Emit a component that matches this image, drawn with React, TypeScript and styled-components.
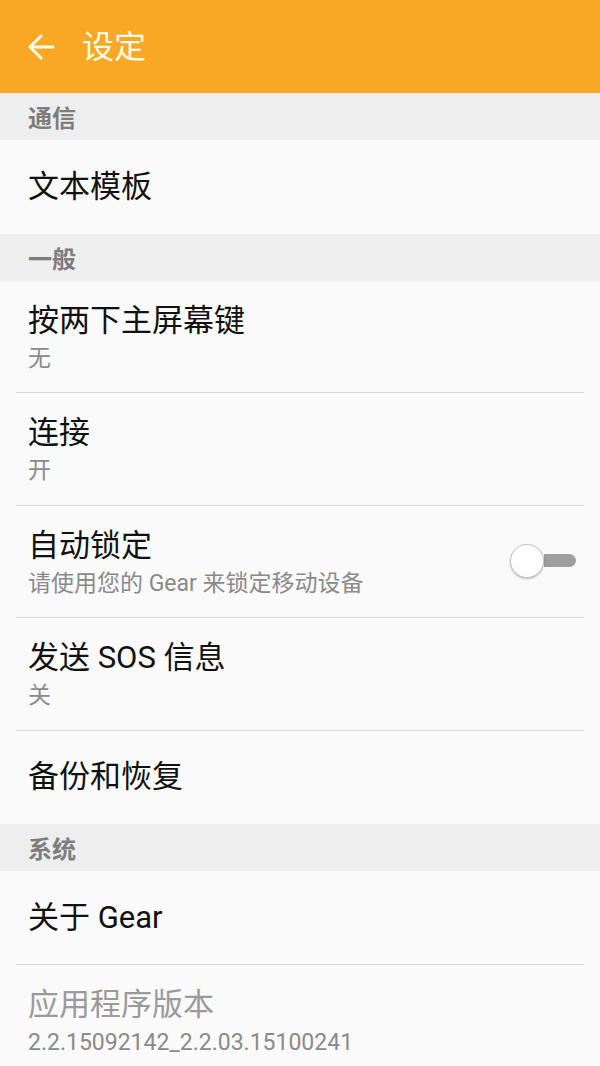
import React from "react";
import styled, { createGlobalStyle } from "styled-components";

const GlobalStyle = createGlobalStyle`
  html, body {
    margin: 0;
    padding: 0;
    background: #fafafa;
  }
  body {
    font-family: Roboto, "Noto Sans CJK SC", sans-serif;
  }
`;

const Screen = styled.div`
  width: 600px;
  min-height: 1066px;
  background: #fafafa;
  overflow: hidden;
`;

const AppBar = styled.header`
  height: 93px;
  background: #f9a825;
  display: flex;
  align-items: center;
  padding-left: 26px;
  gap: 26px;
  box-sizing: border-box;
`;

const BackButton = styled.button`
  border: none;
  background: none;
  padding: 0;
  display: flex;
  align-items: center;
  cursor: pointer;
`;

const AppTitle = styled.h1`
  margin: 0;
  color: #fffde7;
  font-size: 32px;
  font-weight: 400;
  line-height: 1;
`;

const SectionHeader = styled.div`
  height: 47px;
  background: #eeeeee;
  display: flex;
  align-items: center;
  padding-left: 28px;
  color: #7d7d7d;
  font-size: 24px;
  font-weight: 700;
`;

const Row = styled.div<{ $tall?: boolean; $divider?: boolean }>`
  min-height: ${(p) => (p.$tall ? "112.5px" : "93.5px")};
  display: flex;
  align-items: ${(p) => (p.$tall ? "flex-start" : "center")};
  padding: ${(p) => (p.$tall ? "20px 22px 0 28px" : "0 22px 0 28px")};
  box-sizing: border-box;
  position: relative;
  ${(p) =>
    p.$divider &&
    `
    &::after {
      content: "";
      position: absolute;
      left: 16px;
      right: 16px;
      bottom: 0;
      height: 1px;
      background: #d6d6d6;
    }
  `}
`;

const RowText = styled.div`
  flex: 1;
  display: flex;
  flex-direction: column;
`;

const Title = styled.div<{ $muted?: boolean }>`
  font-size: 31px;
  line-height: 40px;
  color: ${(p) => (p.$muted ? "#9a9a9a" : "#111111")};
`;

const Sub = styled.div`
  font-size: 23px;
  line-height: 32px;
  margin-top: 2px;
  color: #8a8a8a;
`;

const Switch = styled.div`
  position: relative;
  width: 68px;
  height: 34px;
  margin-top: 18px;
  display: flex;
  align-items: center;
`;

const Track = styled.div`
  margin-left: 34px;
  width: 32px;
  height: 13px;
  border-radius: 0 7px 7px 0;
  background: #9e9e9e;
`;

const Knob = styled.div`
  position: absolute;
  left: 0;
  top: 0;
  width: 34px;
  height: 34px;
  border-radius: 50%;
  background: #ffffff;
  border: 1px solid #c4c4c4;
  box-sizing: border-box;
  box-shadow: 0 1px 2px rgba(0, 0, 0, 0.25);
`;

const BackArrow = () => (
  <svg width="30" height="30" viewBox="0 0 30 30" fill="none">
    <path
      d="M27 15H4M15 4L4 15l11 11"
      stroke="#fffde7"
      strokeWidth="3"
      strokeLinecap="round"
      strokeLinejoin="round"
    />
  </svg>
);

const generalRows = [
  { title: "按两下主屏幕键", sub: "无" },
  { title: "连接", sub: "开" },
  { title: "自动锁定", sub: "请使用您的 Gear 来锁定移动设备", toggle: true },
  { title: "发送 SOS 信息", sub: "关" },
];

export default function App() {
  return (
    <Screen>
      <GlobalStyle />
      <AppBar>
        <BackButton aria-label="返回">
          <BackArrow />
        </BackButton>
        <AppTitle>设定</AppTitle>
      </AppBar>

      <SectionHeader>通信</SectionHeader>
      <Row>
        <Title>文本模板</Title>
      </Row>

      <SectionHeader>一般</SectionHeader>
      {generalRows.map((r) => (
        <Row key={r.title} $tall $divider>
          <RowText>
            <Title>{r.title}</Title>
            <Sub>{r.sub}</Sub>
          </RowText>
          {r.toggle && (
            <Switch>
              <Track />
              <Knob />
            </Switch>
          )}
        </Row>
      ))}
      <Row>
        <Title>备份和恢复</Title>
      </Row>

      <SectionHeader>系统</SectionHeader>
      <Row $divider>
        <Title>关于 Gear</Title>
      </Row>
      <Row $tall>
        <RowText>
          <Title $muted>应用程序版本</Title>
          <Sub>2.2.15092142_2.2.03.15100241</Sub>
        </RowText>
      </Row>
    </Screen>
  );
}
